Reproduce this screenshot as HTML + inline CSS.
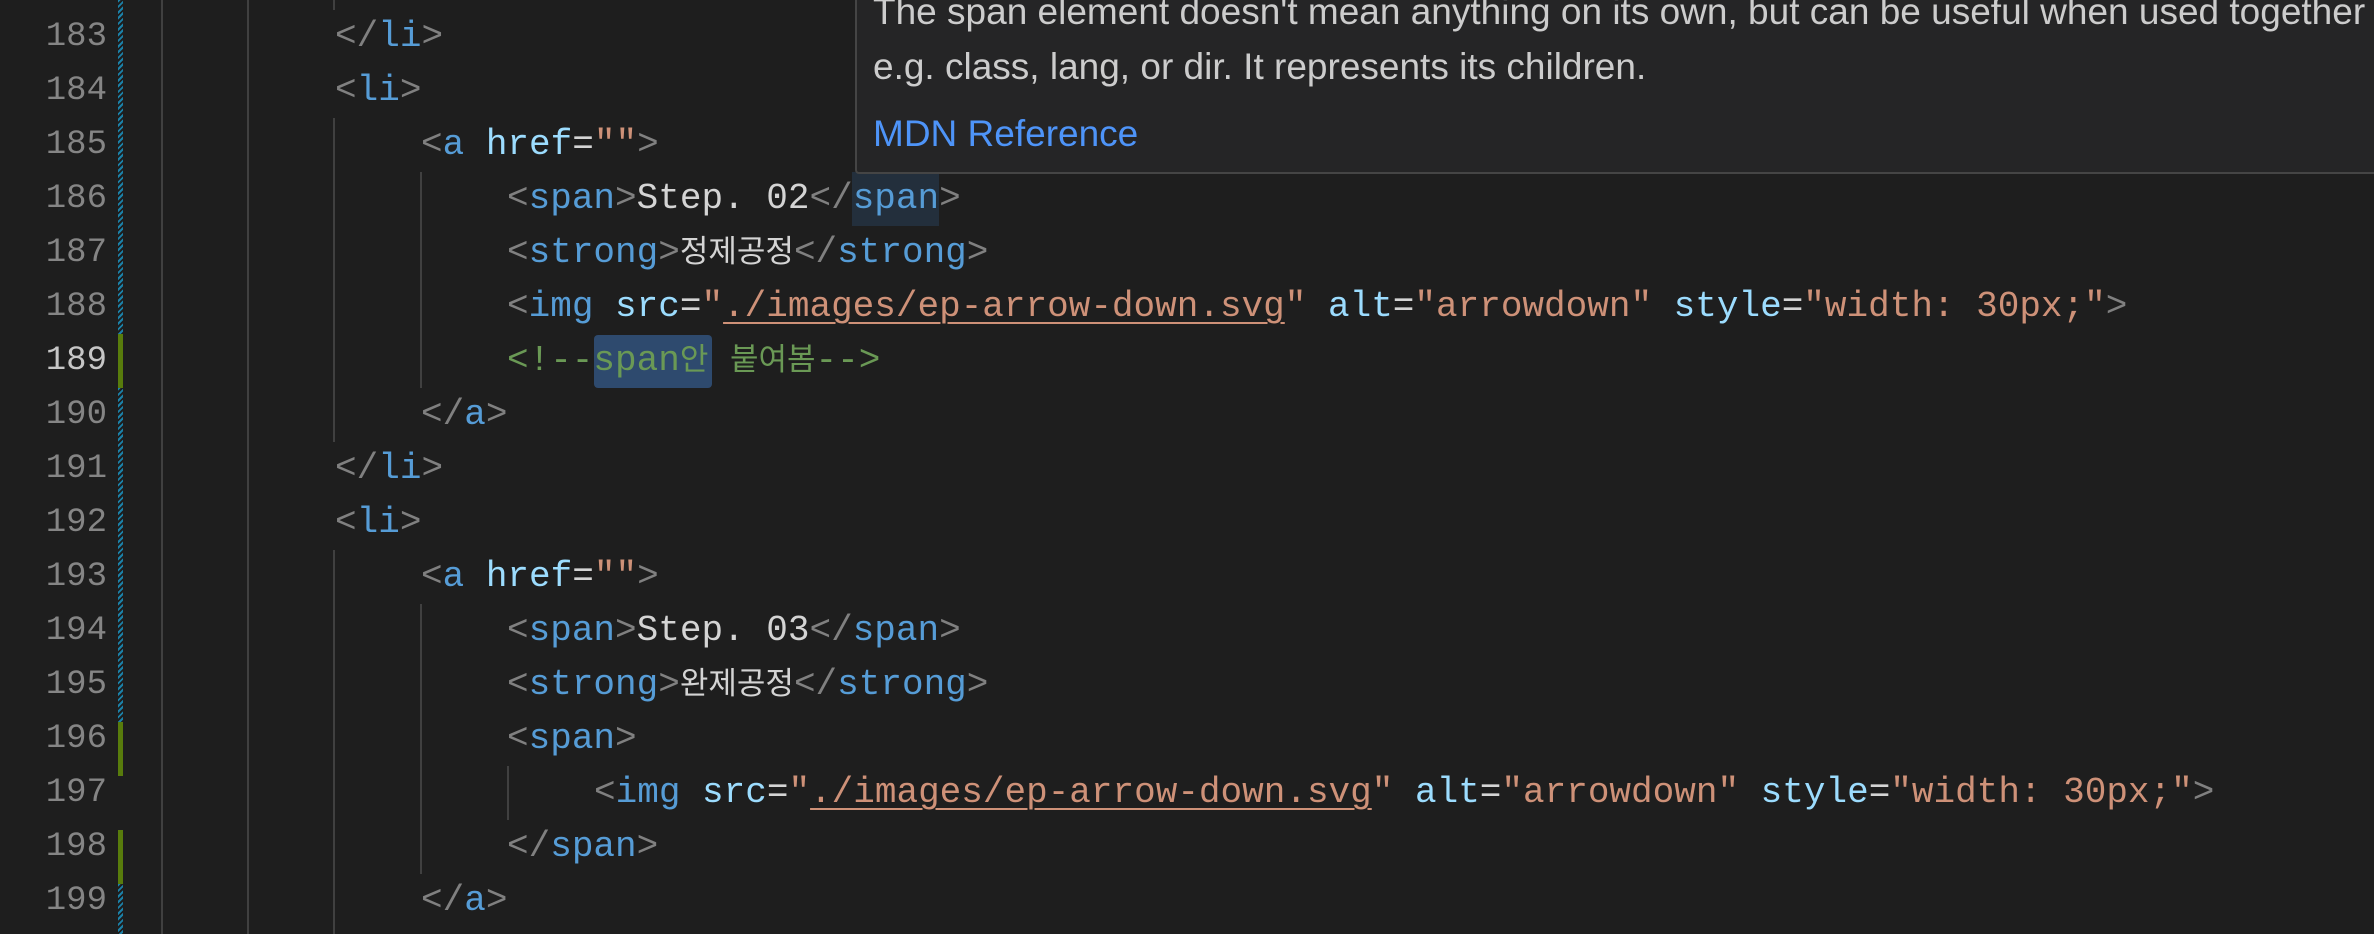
<!DOCTYPE html>
<html><head><meta charset="utf-8"><style>
html,body{margin:0;padding:0;}
body{width:2374px;height:934px;background:#1e1e1e;position:relative;overflow:hidden;font-family:"Liberation Mono","Noto Sans CJK KR",monospace;}
.ln{position:absolute;left:0;width:107px;text-align:right;font-size:34px;color:#858585;height:54px;line-height:54px;}
.ln.cur{color:#c6c6c6;}
.code{position:absolute;height:54px;line-height:54px;font-size:36px;white-space:pre;color:#d4d4d4;}
.b{color:#808080}.t{color:#569cd6}.a{color:#9cdcfe}.s{color:#ce9178}.c{color:#6a9955}
.k{font-size:31px;font-family:"Noto Sans CJK KR",sans-serif;line-height:0;}
.u{text-decoration:underline;text-decoration-color:#ce9178;text-underline-offset:6px;text-decoration-thickness:2px;}
.g{position:absolute;width:2px;background:#404040;}
.mod{position:absolute;left:118px;width:5px;background:repeating-linear-gradient(135deg,#1b81a8 0 2px,#1e1e1e 2px 4px);}
.add{position:absolute;left:118px;width:5px;background:#587c0c;}
.tip{position:absolute;left:855px;top:-4px;width:1519px;height:174px;background:#252526;border:2px solid #454545;border-right:none;border-radius:4px 0 0 4px;font-family:"Liberation Sans",sans-serif;font-size:37px;color:#cccccc;overflow:hidden;box-sizing:content-box;}
.tip div{position:absolute;left:16px;white-space:nowrap;line-height:50px;}
</style></head><body>

<div class="g" style="left:161px;top:0;height:934px"></div>
<div class="g" style="left:247px;top:0;height:934px"></div>
<div class="g" style="left:333px;top:0;height:10px"></div>
<div class="g" style="left:333px;top:118px;height:324px"></div>
<div class="g" style="left:333px;top:550px;height:384px"></div>
<div class="g" style="left:420px;top:172px;height:216px"></div>
<div class="g" style="left:420px;top:604px;height:270px"></div>
<div class="g" style="left:507px;top:766px;height:54px"></div>

<div class="mod" style="top:0;height:334px"></div>
<div class="add" style="top:334px;height:54px"></div>
<div class="mod" style="top:388px;height:334px"></div>
<div class="add" style="top:722px;height:54px"></div>
<div class="add" style="top:830px;height:54px"></div>
<div class="mod" style="top:884px;height:50px"></div>

<div style="position:absolute;left:852px;top:172px;width:87px;height:54px;background:#232f3c"></div>
<div style="position:absolute;left:594px;top:335px;width:118px;height:53px;background:#2e4a6e;border-radius:4px"></div>

<div class="ln" style="top:10px">183</div>
<div class="ln" style="top:64px">184</div>
<div class="ln" style="top:118px">185</div>
<div class="ln" style="top:172px">186</div>
<div class="ln" style="top:226px">187</div>
<div class="ln" style="top:280px">188</div>
<div class="ln cur" style="top:334px">189</div>
<div class="ln" style="top:388px">190</div>
<div class="ln" style="top:442px">191</div>
<div class="ln" style="top:496px">192</div>
<div class="ln" style="top:550px">193</div>
<div class="ln" style="top:604px">194</div>
<div class="ln" style="top:658px">195</div>
<div class="ln" style="top:712px">196</div>
<div class="ln" style="top:766px">197</div>
<div class="ln" style="top:820px">198</div>
<div class="ln" style="top:874px">199</div>

<div class="code" style="top:10px;left:335px"><span class="b">&lt;/</span><span class="t">li</span><span class="b">&gt;</span></div>
<div class="code" style="top:64px;left:335px"><span class="b">&lt;</span><span class="t">li</span><span class="b">&gt;</span></div>
<div class="code" style="top:118px;left:421px"><span class="b">&lt;</span><span class="t">a</span> <span class="a">href</span>=<span class="s">""</span><span class="b">&gt;</span></div>
<div class="code" style="top:172px;left:507px"><span class="b">&lt;</span><span class="t">span</span><span class="b">&gt;</span>Step. 02<span class="b">&lt;/</span><span class="t">span</span><span class="b">&gt;</span></div>
<div class="code" style="top:226px;left:507px"><span class="b">&lt;</span><span class="t">strong</span><span class="b">&gt;</span><span class="k">정제공정</span><span class="b">&lt;/</span><span class="t">strong</span><span class="b">&gt;</span></div>
<div class="code" style="top:280px;left:507px"><span class="b">&lt;</span><span class="t">img</span> <span class="a">src</span>=<span class="s">"<span class="u">./images/ep-arrow-down.svg</span>"</span> <span class="a">alt</span>=<span class="s">"arrowdown"</span> <span class="a">style</span>=<span class="s">"width: 30px;"</span><span class="b">&gt;</span></div>
<div class="code" style="top:334px;left:507px"><span class="c">&lt;!--span<span class="k">안</span> <span class="k">붙여봄</span>--&gt;</span></div>
<div class="code" style="top:388px;left:421px"><span class="b">&lt;/</span><span class="t">a</span><span class="b">&gt;</span></div>
<div class="code" style="top:442px;left:335px"><span class="b">&lt;/</span><span class="t">li</span><span class="b">&gt;</span></div>
<div class="code" style="top:496px;left:335px"><span class="b">&lt;</span><span class="t">li</span><span class="b">&gt;</span></div>
<div class="code" style="top:550px;left:421px"><span class="b">&lt;</span><span class="t">a</span> <span class="a">href</span>=<span class="s">""</span><span class="b">&gt;</span></div>
<div class="code" style="top:604px;left:507px"><span class="b">&lt;</span><span class="t">span</span><span class="b">&gt;</span>Step. 03<span class="b">&lt;/</span><span class="t">span</span><span class="b">&gt;</span></div>
<div class="code" style="top:658px;left:507px"><span class="b">&lt;</span><span class="t">strong</span><span class="b">&gt;</span><span class="k">완제공정</span><span class="b">&lt;/</span><span class="t">strong</span><span class="b">&gt;</span></div>
<div class="code" style="top:712px;left:507px"><span class="b">&lt;</span><span class="t">span</span><span class="b">&gt;</span></div>
<div class="code" style="top:766px;left:594px"><span class="b">&lt;</span><span class="t">img</span> <span class="a">src</span>=<span class="s">"<span class="u">./images/ep-arrow-down.svg</span>"</span> <span class="a">alt</span>=<span class="s">"arrowdown"</span> <span class="a">style</span>=<span class="s">"width: 30px;"</span><span class="b">&gt;</span></div>
<div class="code" style="top:820px;left:507px"><span class="b">&lt;/</span><span class="t">span</span><span class="b">&gt;</span></div>
<div class="code" style="top:874px;left:421px"><span class="b">&lt;/</span><span class="t">a</span><span class="b">&gt;</span></div>

<div class="tip">
<div style="top:-11px">The span element doesn't mean anything on its own, but can be useful when used together with other attributes,</div>
<div style="top:44px">e.g. class, lang, or dir. It represents its children.</div>
<div style="top:111px;color:#4e94f8">MDN Reference</div>
</div>
</body></html>
